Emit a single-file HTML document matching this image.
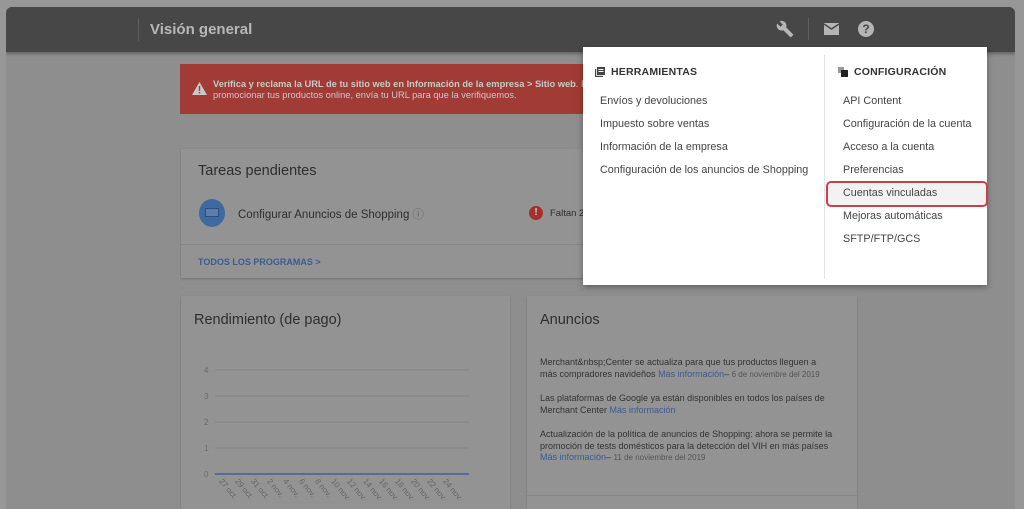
<!DOCTYPE html>
<html><head><meta charset="utf-8"><style>
*{margin:0;padding:0;box-sizing:border-box}
body{width:1024px;height:509px;background:#979797;font-family:"Liberation Sans",sans-serif;position:relative;overflow:hidden}
.frame{position:absolute;left:6px;top:7px;width:1009px;height:502px;background:#8e8e8e;border-radius:6px 6px 0 0;overflow:hidden}
.hdr{position:absolute;left:0;top:0;width:1009px;height:45px;background:#474747;box-shadow:0 2px 3px rgba(0,0,0,.3)}
.hdr .sep{position:absolute;left:132px;top:11px;width:1px;height:23px;background:#5e5e5e}
.hdr .t{position:absolute;left:144px;top:14px;color:#b8b8b8;font-size:15px;font-weight:bold}
.card{position:absolute;background:#939393;box-shadow:0 1px 2px rgba(0,0,0,.2)}
.a{position:absolute;white-space:nowrap}
.x{position:absolute;font-size:8px;color:#666;transform:rotate(50deg);transform-origin:left top;white-space:nowrap}
.menu{position:absolute;left:583px;top:47px;width:404px;height:238px;background:#fff;box-shadow:0 2px 6px rgba(0,0,0,.35)}
.menu .h{position:absolute;font-size:10.5px;font-weight:bold;color:#333;letter-spacing:.2px}
.menu .i{position:absolute;font-size:10.8px;color:#444}
</style></head><body>
<div class="frame">
 <div class="hdr"><div class="sep"></div><div class="t">Visión general</div>
  <svg style="position:absolute;left:770px;top:13px" width="18" height="18" viewBox="0 0 24 24"><path fill="#b5b5b5" d="M22.7 19l-9.1-9.1c.9-2.3.4-5-1.5-6.9-2-2-5-2.4-7.4-1.3L9 6 6 9 1.6 4.7C.4 7.1.9 10.1 2.9 12.1c1.9 1.9 4.6 2.4 6.9 1.5l9.1 9.1c.4.4 1 .4 1.4 0l2.3-2.3c.5-.4.5-1.1.1-1.4z"/></svg>
  <div style="position:absolute;left:802px;top:11px;width:1px;height:22px;background:#5e5e5e"></div>
  <svg style="position:absolute;left:818px;top:16px" width="15" height="12" viewBox="0 0 15 12"><rect width="15" height="12" fill="#b5b5b5"/><path d="M0 1l7.5 5L15 1" stroke="#474747" stroke-width="1.5" fill="none"/></svg>
  <div style="position:absolute;left:852px;top:14px;width:16px;height:16px;border-radius:50%;background:#b5b5b5;color:#474747;font-size:12px;font-weight:bold;text-align:center;line-height:16px">?</div>
 </div>
 <div style="position:absolute;left:174px;top:57px;width:420px;height:50px;background:#a13b35"></div>
 <svg style="position:absolute;left:186px;top:75px" width="15" height="13" viewBox="0 0 15 13"><path d="M7.5 0L15 13H0z" fill="#c8c8c8"/><rect x="6.8" y="4" width="1.4" height="5" fill="#a13b35"/><rect x="6.8" y="10" width="1.4" height="1.4" fill="#a13b35"/></svg>
 <div class="a" style="left:207px;top:72px;font-size:9.3px;color:#c9c9c9;line-height:11px"><b>Verifica y reclama la URL de tu sitio web en Información de la empresa &gt; Sitio web</b>. Para<br>promocionar tus productos online, envía tu URL para que la verifiquemos.</div>
 <div class="card" style="left:175px;top:142px;width:420px;height:129px"></div>
 <div class="a" style="left:192px;top:156px;font-size:14.5px;color:#2e2e2e">Tareas pendientes</div>
 <div style="position:absolute;left:193px;top:192px;width:26px;height:28px;border-radius:50%;background:#3f6aa0"></div>
 <div style="position:absolute;left:199px;top:201px;width:14px;height:9px;background:#5a7fae;border:1px solid #2f4f7a"></div>
 <div class="a" style="left:232px;top:199px;font-size:11.5px;color:#2e2e2e">Configurar Anuncios de Shopping <span style="color:#666">ⓘ</span></div>
 <div style="position:absolute;left:523px;top:199px;width:14px;height:14px;border-radius:50%;background:#a3302c;color:#ccc;font-size:10px;font-weight:bold;text-align:center;line-height:14px">!</div>
 <div class="a" style="left:544px;top:201px;font-size:9.5px;color:#2e2e2e">Faltan 2</div>
 <div style="position:absolute;left:175px;top:237px;width:410px;height:1px;background:#868686"></div>
 <div class="a" style="left:192px;top:250px;font-size:9px;font-weight:bold;color:#3d5a94">TODOS LOS PROGRAMAS &gt;</div>
 <div class="card" style="left:175px;top:289px;width:329px;height:220px"></div>
 <div class="a" style="left:188px;top:305px;font-size:14.5px;color:#2e2e2e">Rendimiento (de pago)</div>
 <svg style="position:absolute;left:195px;top:355px" width="280" height="150" viewBox="0 0 280 150">
  <g stroke="#848484" stroke-width="1"><line x1="14" y1="8" x2="268" y2="8"/><line x1="14" y1="34" x2="268" y2="34"/><line x1="14" y1="60" x2="268" y2="60"/><line x1="14" y1="86" x2="268" y2="86"/></g>
  <line x1="14" y1="112" x2="268" y2="112" stroke="#3f5ea0" stroke-width="1.5"/>
  <g font-size="8" fill="#6a6a6a" font-family="Liberation Sans"><text x="3" y="11">4</text><text x="3" y="37">3</text><text x="3" y="63">2</text><text x="3" y="89">1</text><text x="3" y="115">0</text></g>
 </svg>
 <div class="x" style="left:218px;top:470px">27 oct.</div>
 <div class="x" style="left:234px;top:470px">29 oct.</div>
 <div class="x" style="left:250px;top:470px">31 oct.</div>
 <div class="x" style="left:266px;top:470px">2 nov.</div>
 <div class="x" style="left:282px;top:470px">4 nov.</div>
 <div class="x" style="left:298px;top:470px">6 nov.</div>
 <div class="x" style="left:314px;top:470px">8 nov.</div>
 <div class="x" style="left:330px;top:470px">10 nov.</div>
 <div class="x" style="left:346px;top:470px">12 nov.</div>
 <div class="x" style="left:362px;top:470px">14 nov.</div>
 <div class="x" style="left:378px;top:470px">16 nov.</div>
 <div class="x" style="left:394px;top:470px">18 nov.</div>
 <div class="x" style="left:410px;top:470px">20 nov.</div>
 <div class="x" style="left:426px;top:470px">22 nov.</div>
 <div class="x" style="left:442px;top:470px">24 nov.</div>
 <div class="card" style="left:521px;top:289px;width:330px;height:220px"></div>
 <div class="a" style="left:534px;top:305px;font-size:14.5px;color:#2e2e2e">Anuncios</div>
 <div class="a" style="left:534px;top:350px;font-size:9px;color:#333;line-height:11.5px">Merchant&amp;nbsp;Center se actualiza para que tus productos lleguen a<br>más compradores navideños <span style="color:#3d5a94">Más información</span>– <span style="font-size:8px;color:#555">6 de noviembre del 2019</span></div>
 <div class="a" style="left:534px;top:386px;font-size:9px;color:#333;line-height:11.5px">Las plataformas de Google ya están disponibles en todos los países de<br>Merchant Center <span style="color:#3d5a94">Más información</span></div>
 <div class="a" style="left:534px;top:422px;font-size:9px;color:#333;line-height:11.5px">Actualización de la política de anuncios de Shopping: ahora se permite la<br>promoción de tests domésticos para la detección del VIH en más países<br><span style="color:#3d5a94">Más información</span>– <span style="font-size:8px;color:#555">11 de noviembre del 2019</span></div>
 <div style="position:absolute;left:521px;top:488px;width:330px;height:1px;background:#888"></div>
</div>
<div class="menu">
 <svg style="position:absolute;left:12px;top:20px" width="10" height="10" viewBox="0 0 10 10"><rect x="2" y="0" width="8" height="8" fill="#444"/><rect x="0" y="2" width="1.2" height="8" fill="#444"/><rect x="0" y="8.8" width="8" height="1.2" fill="#444"/><g fill="#fff"><rect x="3.5" y="2" width="5" height="1"/><rect x="3.5" y="4" width="5" height="1"/></g></svg>
 <div class="h" style="left:28px;top:19px">HERRAMIENTAS</div>
 <div class="i" style="left:17px;top:48px">Envíos y devoluciones</div>
 <div class="i" style="left:17px;top:71px">Impuesto sobre ventas</div>
 <div class="i" style="left:17px;top:94px">Información de la empresa</div>
 <div class="i" style="left:17px;top:117px">Configuración de los anuncios de Shopping</div>
 <div style="position:absolute;left:241px;top:8px;width:1px;height:224px;background:#e3e3e3"></div>
 <svg style="position:absolute;left:255px;top:20px" width="10" height="10" viewBox="0 0 10 10"><rect x="0" y="0" width="6" height="6" fill="#999"/><rect x="3" y="3" width="7" height="7" fill="#222"/></svg>
 <div class="h" style="left:271px;top:19px">CONFIGURACIÓN</div>
 <div class="i" style="left:260px;top:48px">API Content</div>
 <div class="i" style="left:260px;top:71px">Configuración de la cuenta</div>
 <div class="i" style="left:260px;top:94px">Acceso a la cuenta</div>
 <div class="i" style="left:260px;top:117px">Preferencias</div>
 <div style="position:absolute;left:243px;top:134px;width:162px;height:26px;border:2px solid #c9404a;border-radius:5px;background:#f2f2f2"></div>
 <div class="i" style="left:260px;top:140px">Cuentas vinculadas</div>
 <div class="i" style="left:260px;top:163px">Mejoras automáticas</div>
 <div class="i" style="left:260px;top:186px">SFTP/FTP/GCS</div>
</div>
</body></html>
